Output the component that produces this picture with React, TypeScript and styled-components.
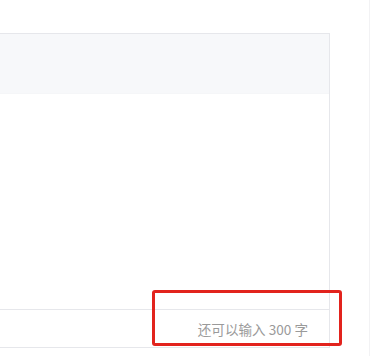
import React from 'react'
import styled, { createGlobalStyle } from 'styled-components'

const GlobalStyle = createGlobalStyle`
    html, body {
        margin: 0;
        padding: 0;
        background: #ffffff;
        font-family: "Noto Sans CJK SC", "Noto Sans", sans-serif;
    }
`

const Page = styled.div`
    position: relative;
    width: 371px;
    height: 356px;
    display: flex;
    overflow: hidden;
`

const Content = styled.div`
    width: 369px;
    padding-top: 33px;
    border-right: 1px solid #f2f2f4;
`

const Panel = styled.section`
    width: 330px;
    height: 315px;
    display: flex;
    flex-direction: column;
    border: 1px solid #e6e7eb;
    border-left: none;
    box-sizing: border-box;
`

const Header = styled.div`
    height: 59px;
    background: #f7f8fa;
    border-bottom: 1px solid #f5f6f8;
`

const Body = styled.div`
    flex: 1;
`

const Footer = styled.div`
    height: 37px;
    display: flex;
    align-items: center;
    justify-content: flex-end;
    padding-right: 21px;
    border-top: 1px solid #e6e7eb;
    font-size: 13.6px;
    color: #9a9a9a;
`

const Highlight = styled.div`
    position: absolute;
    left: 152px;
    top: 290px;
    width: 190px;
    height: 56px;
    box-sizing: border-box;
    border: 3px solid #e2231d;
    border-radius: 3px;
    pointer-events: none;
`

const App = () => {
    const remaining = 300
    return (
        <>
            <GlobalStyle />
            <Page>
                <Content>
                    <Panel>
                        <Header />
                        <Body />
                        <Footer>还可以输入 {remaining} 字</Footer>
                    </Panel>
                </Content>
                <Highlight />
            </Page>
        </>
    )
}

export default App
